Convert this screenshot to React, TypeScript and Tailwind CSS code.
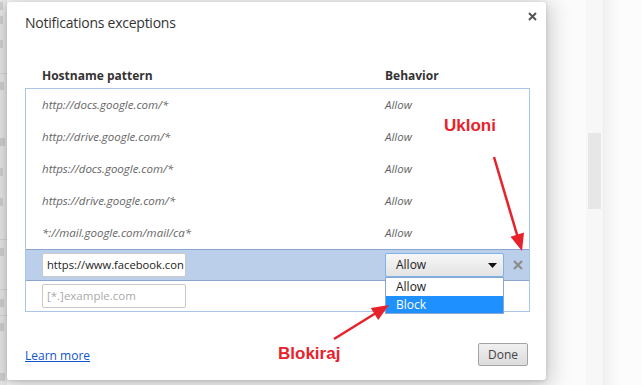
import React from 'react';

const rows = [
  'http://docs.google.com/*',
  'http://drive.google.com/*',
  'https://docs.google.com/*',
  'https://drive.google.com/*',
  '*://mail.google.com/mail/ca*',
];

// faint pieces of the settings page behind the overlay (left edge)
const behind = [
  { h: 'h-[12px]', w: 'w-[3px]' },
  { h: 'h-[16px]', w: 'w-[3px]' },
  { h: 'h-[32px]', w: 'w-[3px]' },
  { h: 'h-[13px]', w: '' },
  { h: 'h-[24px]', w: 'w-[4px]', line: true },
  { h: 'h-[30px]', w: '' },
  { h: 'h-[30px]', w: 'w-[5px]' },
  { h: 'h-[30px]', w: 'w-[3px]' },
  { h: 'h-[30px]', w: 'w-[3px]' },
  { h: 'h-[22px]', w: '' },
  { h: 'h-[24px]', w: 'w-[4px]', line: true },
  { h: 'h-[26px]', w: '' },
  { h: 'h-[26px]', w: 'w-[4px]', line: true },
  { h: 'h-[22px]', w: 'w-[4px]', line: true },
  { h: 'h-[30px]', w: '' },
  { h: 'h-[20px]', w: 'w-[5px]' },
];

export default function App() {
  return (
    <div className="relative w-[642px] h-[385px] overflow-hidden bg-[#fbfbfb] font-['Open_Sans',sans-serif] text-[#333]">
      <div className="flex h-full">
        {/* page behind the dialog */}
        <div className="w-[7px] shrink-0 bg-[#ececec] flex flex-col overflow-hidden">
          {behind.map((b, i) => (
            <div key={i} className={`${b.h} shrink-0 flex items-center ${b.line ? 'border-t border-[#dadada]' : ''}`}>
              {b.w && <div className={`${b.w} h-[8px] bg-[#d4d4d4]`} />}
            </div>
          ))}
        </div>

        {/* dialog */}
        <div className="relative z-10 mt-[2px] h-[378px] w-[539px] shrink-0 rounded-[3px] bg-white shadow-[0_4px_22px_4px_rgba(0,0,0,0.2),0_1px_4px_rgba(0,0,0,0.15)]">
          <div className="pt-[11px] pl-[18px] text-[14px] tracking-[-0.25px] leading-[20px] text-[#333]">Notifications exceptions</div>
          <button className="absolute top-[10px] right-[9px] p-0">
            <svg width="9" height="9" viewBox="0 0 9 9">
              <path d="M1 1L8 8M8 1L1 8" stroke="#555" strokeWidth="2" />
            </svg>
          </button>

          <div className="mt-[35px] flex text-[12px] leading-[16px] font-bold text-[#333]">
            <div className="pl-[35px] w-[378px]">Hostname pattern</div>
            <div>Behavior</div>
          </div>

          <div className="mt-[4px] ml-[18px] w-[505px] border border-[#a9c6ea] flex flex-col">
            {rows.map((r) => (
              <div key={r} className="h-[32px] flex items-center text-[11.5px] italic text-[#666]">
                <div className="pl-[16px] w-[359px]">{r}</div>
                <div>Allow</div>
              </div>
            ))}

            {/* row being edited */}
            <div className="h-[32px] flex items-center bg-[#bccfea] border-y border-[#8aa5d0]">
              <div className="pl-[16px] w-[359px]">
                <div className="w-[144px] h-[24px] bg-white border border-[#c9c9c9] rounded-[2px] pl-[4px] flex items-center overflow-hidden whitespace-nowrap text-[11.2px] text-[#222]">
                  https://www.facebook.con
                </div>
              </div>
              <div className="relative">
                <div className="w-[119px] h-[24px] rounded-[2px] border border-[#7eb2ea] bg-gradient-to-b from-[#f7f7f7] to-[#e3e3e3] flex items-center justify-between pl-[10px] pr-[6px] text-[12px] text-[#222]">
                  <span>Allow</span>
                  <svg width="9" height="5" viewBox="0 0 9 5">
                    <path d="M0 0H9L4.5 5Z" fill="#111" />
                  </svg>
                </div>
                <div className="absolute left-0 top-[24px] z-20 w-[119px] bg-white border border-[#8aa5cf] text-[12px] text-[#222] flex flex-col">
                  <div className="h-[18px] flex items-center pl-[10px]">Allow</div>
                  <div className="h-[17px] flex items-center pl-[10px] bg-[#1e90ff] text-white">Block</div>
                </div>
              </div>
              <div className="ml-[9px]">
                <svg width="10" height="10" viewBox="0 0 10 10">
                  <path d="M1 1L9 9M9 1L1 9" stroke="#8c8c8c" strokeWidth="2.2" />
                </svg>
              </div>
            </div>

            {/* new entry row */}
            <div className="h-[30px] flex items-center">
              <div className="pl-[16px]">
                <div className="w-[144px] h-[24px] bg-white border border-[#c9c9c9] rounded-[2px] pl-[4px] flex items-center text-[11.5px] text-[#aaa]">
                  [*.]example.com
                </div>
              </div>
            </div>
          </div>

          <div className="mt-[31px] px-[18px] flex items-center justify-between">
            <a className="pt-[3px] text-[12px] text-[#15c] underline">Learn more</a>
            <button className="w-[50px] h-[23px] rounded-[2px] border border-[#a3a3a3] bg-gradient-to-b from-[#f0f0f0] to-[#dcdcdc] text-[12px] text-[#444]">
              Done
            </button>
          </div>
        </div>

        {/* right side of the page behind */}
        <div className="w-[40px] shrink-0" />
        <div className="w-[17px] shrink-0 bg-[#f7f7f7] pt-[133px] px-[2px]">
          <div className="h-[76px] bg-[#e7e7e7]" />
        </div>
        <div className="flex-1 border-l border-[#ededed] bg-gradient-to-r from-[#f1f1f1] to-[#fcfcfc] to-[40%]" />
      </div>

      {/* red annotations */}
      <div className="absolute left-[444px] top-[116px] z-30 text-[17px] leading-[20px] font-bold text-[#e8222b] font-['Liberation_Sans',sans-serif]">
        Ukloni
      </div>
      <div className="absolute left-[278px] top-[344px] z-30 text-[17px] leading-[20px] font-bold text-[#e8222b] font-['Liberation_Sans',sans-serif]">
        Blokiraj
      </div>
      <svg className="absolute inset-0 z-30 pointer-events-none" width="642" height="385" viewBox="0 0 642 385">
        <path d="M494 157L518 238" stroke="#e8222b" strokeWidth="2.5" />
        <path d="M522 251L524 232.5L510.5 236.7Z" fill="#e8222b" />
        <path d="M334 339L376 313" stroke="#e8222b" strokeWidth="2.5" />
        <path d="M389 305L378.2 320L370.8 307.9Z" fill="#e8222b" />
      </svg>
    </div>
  );
}
